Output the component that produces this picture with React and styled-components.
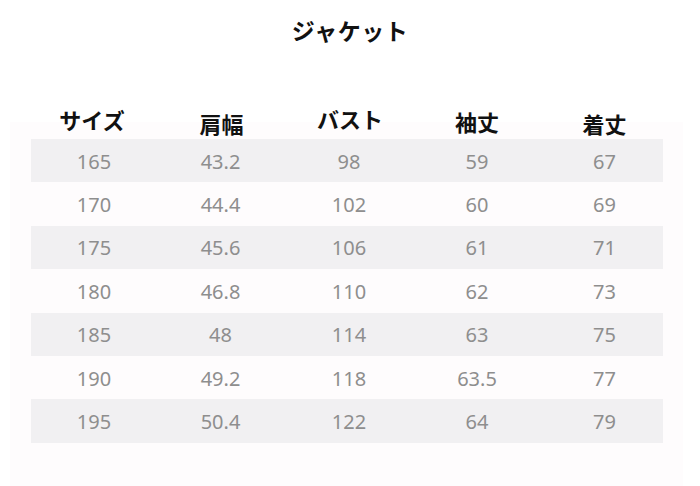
import styled, { createGlobalStyle } from "styled-components";

const GlobalStyle = createGlobalStyle`
  html, body { margin: 0; padding: 0; background: #ffffff; }
  body { font-family: "Noto Sans", "Noto Sans CJK JP", sans-serif; }
`;

const Page = styled.div`
  width: 700px;
  height: 486px;
  overflow: hidden;
  position: relative;
`;

const Title = styled.h1`
  margin: 0;
  padding-top: 15px;
  height: 30px;
  text-align: center;
  font-family: "Noto Sans CJK JP", sans-serif;
  font-weight: 700;
  font-size: 23px;
  line-height: 30px;
  color: #111;
  letter-spacing: 0.5px;
`;

const Panel = styled.div`
  margin: 77px 17px 0 10px;
  background: #fefcfd;
  height: 400px;
  padding-top: 15px;
`;

const Table = styled.div`
  margin-left: 21px;
  width: 632px;
`;

const cols = "126px 127px 130px 126px 123px";

const HeadRow = styled.div`
  display: grid;
  grid-template-columns: ${cols};
  height: 32px;
  margin-top: -30px;
`;

const Head = styled.div`
  text-align: center;
  font-family: "Noto Sans CJK JP", sans-serif;
  font-weight: 700;
  font-size: 22px;
  line-height: 30px;
  color: #111;
  transform: translate(${(p) => p.$dx || 0}px, ${(p) => p.$dy || 0}px);
`;

const Row = styled.div`
  display: grid;
  grid-template-columns: ${cols};
  height: 43.4px;
  align-items: center;
  background: ${(p) => (p.$shade ? "#f1f0f2" : "transparent")};
`;

const Cell = styled.div`
  text-align: center;
  font-size: 20px;
  color: #8e8e8e;
  line-height: 1;
  transform: translate(${(p) => p.$dx || 0}px, 1px);
`;

const heads = [
  { t: "サイズ", dx: -2, dy: -3 },
  { t: "肩幅", dx: 1, dy: 1 },
  { t: "バスト", dx: 1, dy: -4 },
  { t: "袖丈", dx: 0, dy: -1 },
  { t: "着丈", dx: 3, dy: 1 },
];

const rows = [
  ["165", "43.2", "98", "59", "67"],
  ["170", "44.4", "102", "60", "69"],
  ["175", "45.6", "106", "61", "71"],
  ["180", "46.8", "110", "62", "73"],
  ["185", "48", "114", "63", "75"],
  ["190", "49.2", "118", "63.5", "77"],
  ["195", "50.4", "122", "64", "79"],
];

const shifts = [0, 0, 0, 0, 3];

export default function App() {
  return (
    <Page>
      <GlobalStyle />
      <Title>ジャケット</Title>
      <Panel>
        <Table>
          <HeadRow>
            {heads.map((h) => (
              <Head key={h.t} $dx={h.dx} $dy={h.dy}>
                {h.t}
              </Head>
            ))}
          </HeadRow>
          {rows.map((r, i) => (
            <Row key={r[0]} $shade={i % 2 === 0}>
              {r.map((v, j) => (
                <Cell key={j} $dx={shifts[j]}>
                  {v}
                </Cell>
              ))}
            </Row>
          ))}
        </Table>
      </Panel>
    </Page>
  );
}
